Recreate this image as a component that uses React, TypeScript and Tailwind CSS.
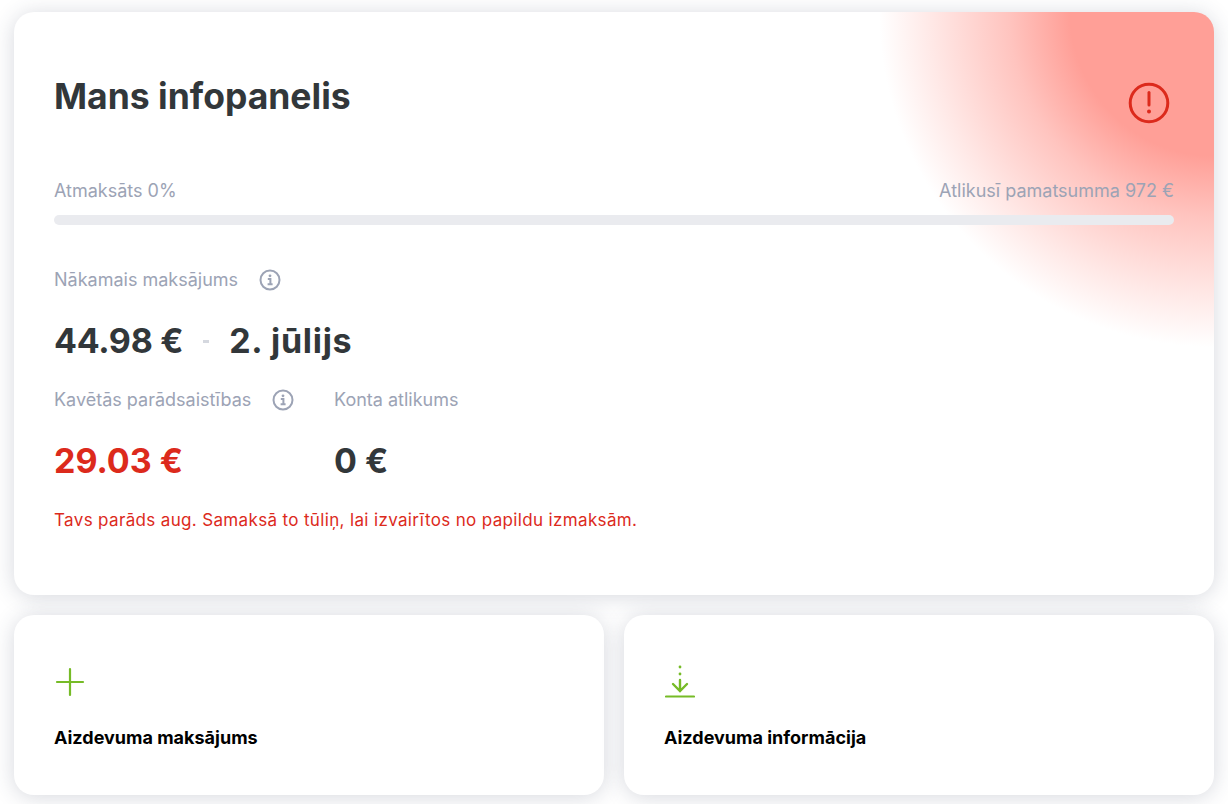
import React from 'react';

const font = { fontFamily: 'Inter, sans-serif' };

function InfoIcon() {
  return (
    <svg width="22" height="22" viewBox="0 0 22 22" fill="none" className="shrink-0">
      <circle cx="11" cy="11" r="9.5" stroke="#9ca3b5" strokeWidth="2" />
      <circle cx="11" cy="6.8" r="1.4" fill="#9ca3b5" />
      <path d="M8.8 10h2.6v5M8.6 15.2h5" stroke="#9ca3b5" strokeWidth="2" />
    </svg>
  );
}

function AlertIcon() {
  return (
    <svg width="42" height="42" viewBox="0 0 42 42" fill="none" className="mt-[8px] mr-[4px]">
      <circle cx="21" cy="21" r="18.8" stroke="#dc2a1c" strokeWidth="3" />
      <path d="M21 10.5v12.5" stroke="#dc2a1c" strokeWidth="3" strokeLinecap="round" />
      <circle cx="21" cy="29.5" r="2" fill="#dc2a1c" />
    </svg>
  );
}

function PlusIcon() {
  return (
    <svg width="30" height="30" viewBox="0 0 30 30" fill="none" className="ml-px">
      <path d="M15 2v26M2 15h26" stroke="#76bb27" strokeWidth="2.2" strokeLinecap="round" />
    </svg>
  );
}

function DownloadIcon() {
  return (
    <svg width="30" height="34" viewBox="0 0 30 34" fill="none" className="ml-px">
      <circle cx="15" cy="2" r="1.4" fill="#76bb27" />
      <circle cx="15" cy="9" r="1.4" fill="#76bb27" />
      <path d="M15 15v10M8 19l7 7 7-7" stroke="#76bb27" strokeWidth="2.4" strokeLinecap="round" />
      <path d="M1 31.5h28" stroke="#76bb27" strokeWidth="2.2" strokeLinecap="round" />
    </svg>
  );
}

function ActionCard({ icon, title }: { icon: React.ReactNode; title: string }) {
  return (
    <div className="bg-white rounded-[20px] shadow-[0_2px_22px_rgba(50,60,90,0.2)] h-[180px] px-10 flex flex-col">
      <div className="h-[34px] mt-[50px] flex items-center">{icon}</div>
      <div className="mt-[27px] text-[18px] font-bold text-black leading-6">{title}</div>
    </div>
  );
}

export default function App() {
  return (
    <div style={font} className="bg-white h-[804px] overflow-hidden px-[14px] pt-3">
      <div className="rounded-[20px] h-[583px] px-10 bg-white shadow-[0_2px_22px_rgba(50,60,90,0.2)] bg-[radial-gradient(circle_at_top_right,#ff9f97_144px,#ffc4bf_205px,#ffe9e7_285px,#fff_335px)]">
        <div className="flex justify-between pt-[62px] h-[150px]">
          <h1 className="text-[35.5px] font-bold text-[#32373a] leading-[46px]">Mans infopanelis</h1>
          <AlertIcon />
        </div>
        <div className="flex justify-between text-[18px] text-[#9ca3b5] leading-6 mt-[17px]">
          <span>Atmaksāts 0%</span>
          <span>Atlikusī pamatsumma 972 €</span>
        </div>
        <div className="h-[10px] rounded-full bg-[#eaebef] mt-[12px]" />

        <div className="flex items-center text-[18px] text-[#9ca3b5] leading-6 mt-[43px]">
          <span>Nākamais maksājums</span>
          <span className="ml-[21px]"><InfoIcon /></span>
        </div>
        <div className="flex items-center text-[34px] font-bold text-[#32373a] leading-[44px] mt-[27px]">
          <span className="tracking-[-0.3px]">44.98 €</span>
          <span className="w-[6px] h-[3px] bg-[#d5d8df] mx-[20px]" />
          <span className="tracking-[0.7px]">2. jūlijs</span>
        </div>

        <div className="flex mt-[25px]">
          <div className="w-[280px]">
            <div className="flex items-center text-[18px] text-[#9ca3b5] leading-6">
              <span>Kavētās parādsaistības</span>
              <span className="ml-[21px]"><InfoIcon /></span>
            </div>
            <div className="text-[34px] font-bold text-[#dc2a1c] leading-[44px] mt-[27px]">29.03 €</div>
          </div>
          <div>
            <div className="text-[18px] text-[#9ca3b5] leading-6">Konta atlikums</div>
            <div className="text-[34px] font-bold text-[#32373a] leading-[44px] mt-[27px]">0 €</div>
          </div>
        </div>

        <p className="text-[17px] tracking-[0.35px] text-[#dc2a1c] leading-6 mt-[25px]">
          Tavs parāds aug. Samaksā to tūliņ, lai izvairītos no papildu izmaksām.
        </p>
      </div>

      <div className="grid grid-cols-2 gap-5 mt-5">
        <ActionCard icon={<PlusIcon />} title="Aizdevuma maksājums" />
        <ActionCard icon={<DownloadIcon />} title="Aizdevuma informācija" />
      </div>
    </div>
  );
}
